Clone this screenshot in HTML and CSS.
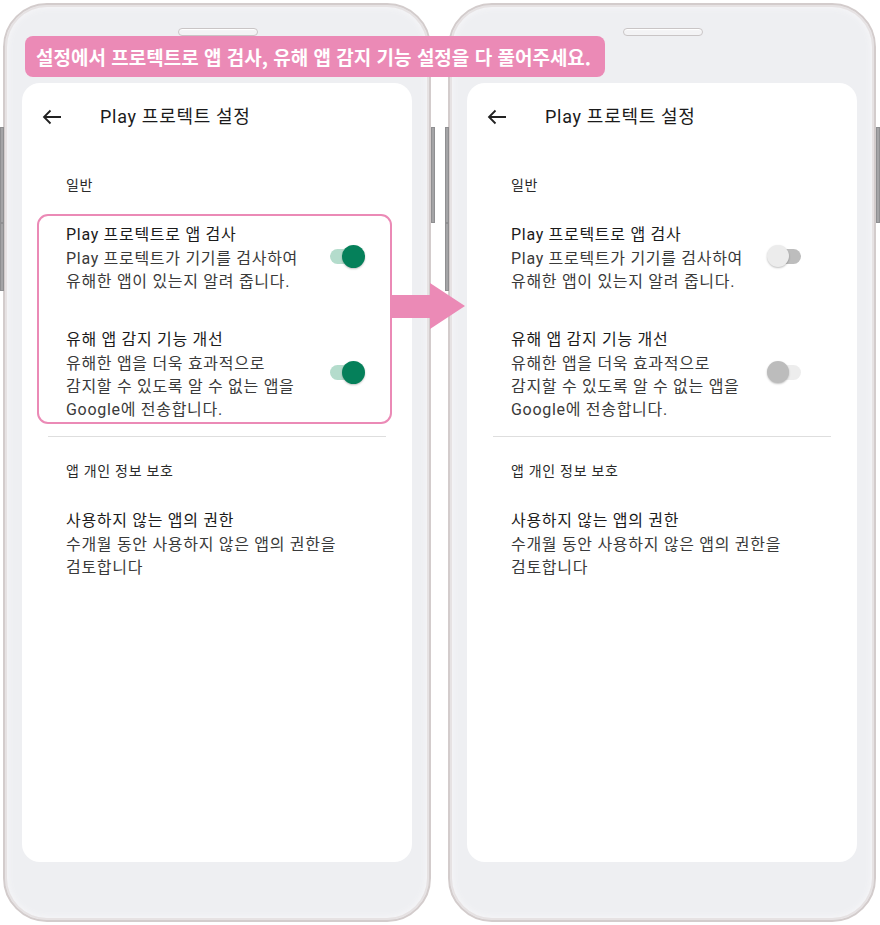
FILE: index.html
```html
<!DOCTYPE html>
<html lang="ko">
<head>
<meta charset="utf-8">
<title>Play 프로텍트 설정</title>
<link rel="stylesheet" href="styles.css">
</head>
<body>
<div class="stage">
  <div class="phone">
    <span class="side side-left side-a"></span>
    <span class="side side-left side-b"></span>
    <span class="side side-right side-a"></span>
    <div class="speaker"></div>
    <div class="screen">
      <div class="appbar">
        <svg class="back" viewBox="0 0 20 16" width="20" height="16"><path d="M19 8H2M8.5 1.5L2 8l6.5 6.5" fill="none" stroke="#222" stroke-width="1.8"/></svg>
        <h1 class="title">Play 프로텍트 설정</h1>
      </div>
      <div class="section-label">일반</div>
      <div class="group highlight">
        <div class="item">
          <div class="item-text">
            <div class="item-title">Play 프로텍트로 앱 검사</div>
            <div class="item-sub">Play 프로텍트가 기기를 검사하여<br>유해한 앱이 있는지 알려 줍니다.</div>
          </div>
          <span class="toggle on"><span class="track"></span><span class="thumb"></span></span>
        </div>
        <div class="item item-next">
          <div class="item-text">
            <div class="item-title">유해 앱 감지 기능 개선</div>
            <div class="item-sub">유해한 앱을 더욱 효과적으로<br>감지할 수 있도록 알 수 없는 앱을<br>Google에 전송합니다.</div>
          </div>
          <span class="toggle on"><span class="track"></span><span class="thumb"></span></span>
        </div>
      </div>
      <div class="divider"></div>
      <div class="section-label section-label-2">앱 개인 정보 보호</div>
      <div class="item item-solo">
        <div class="item-text">
          <div class="item-title">사용하지 않는 앱의 권한</div>
          <div class="item-sub">수개월 동안 사용하지 않은 앱의 권한을<br>검토합니다</div>
        </div>
      </div>
    </div>
  </div>

  <div class="phone">
    <span class="side side-left side-a"></span>
    <span class="side side-left side-b"></span>
    <span class="side side-right side-a"></span>
    <div class="speaker"></div>
    <div class="screen">
      <div class="appbar">
        <svg class="back" viewBox="0 0 20 16" width="20" height="16"><path d="M19 8H2M8.5 1.5L2 8l6.5 6.5" fill="none" stroke="#222" stroke-width="1.8"/></svg>
        <h1 class="title">Play 프로텍트 설정</h1>
      </div>
      <div class="section-label">일반</div>
      <div class="group">
        <div class="item">
          <div class="item-text">
            <div class="item-title">Play 프로텍트로 앱 검사</div>
            <div class="item-sub">Play 프로텍트가 기기를 검사하여<br>유해한 앱이 있는지 알려 줍니다.</div>
          </div>
          <span class="toggle off-a"><span class="track"></span><span class="thumb"></span></span>
        </div>
        <div class="item item-next">
          <div class="item-text">
            <div class="item-title">유해 앱 감지 기능 개선</div>
            <div class="item-sub">유해한 앱을 더욱 효과적으로<br>감지할 수 있도록 알 수 없는 앱을<br>Google에 전송합니다.</div>
          </div>
          <span class="toggle off-b"><span class="track"></span><span class="thumb"></span></span>
        </div>
      </div>
      <div class="divider"></div>
      <div class="section-label section-label-2">앱 개인 정보 보호</div>
      <div class="item item-solo">
        <div class="item-text">
          <div class="item-title">사용하지 않는 앱의 권한</div>
          <div class="item-sub">수개월 동안 사용하지 않은 앱의 권한을<br>검토합니다</div>
        </div>
      </div>
    </div>
  </div>

  <div class="banner">설정에서 프로텍트로 앱 검사, 유해 앱 감지 기능 설정을 다 풀어주세요.</div>
  <svg class="arrow" viewBox="0 0 76 47" width="76" height="47"><polygon points="0,12 40,12 40,0 75,23 40,46 40,35 0,35" fill="#eb8ab6"/></svg>
</div>
</body>
</html>
```

FILE: styles.css
```css
* { box-sizing: border-box; }
html, body { margin: 0; padding: 0; background: #ffffff; }
body {
  font-family: Roboto, "Noto Sans CJK KR", sans-serif;
  color: #1f1f1f;
}
.stage {
  position: relative;
  display: flex;
  gap: 17px;
  padding: 3px;
  width: 880px;
  height: 925px;
}
.phone {
  position: relative;
  width: 428px;
  height: 919px;
  border: 2px solid #d3cccc;
  border-radius: 44px;
  background: #eeeff2;
  box-shadow: inset 0 0 0 2px #e6e2e3, inset 0 0 6px 3px #f6f6f8;
  padding: 78px 17px 58px;
}
.side {
  position: absolute;
  width: 4px;
  background: #a4a4a6;
  border: 1px solid #8f8f91;
}
.side-left { left: -5px; }
.side-right { right: -6px; }
.side-a { top: 122px; height: 96px; }
.side-b { top: 218px; height: 68px; }
.speaker {
  position: absolute;
  top: 23px;
  left: 173px;
  width: 80px;
  height: 8px;
  border-radius: 5px;
  border: 1px solid #c9c5c6;
  background: #f3f3f5;
  box-shadow: inset 0 1px 1px #ffffff;
}
.screen {
  height: 779px;
  background: #ffffff;
  border-radius: 18px;
  padding-top: 10px;
  letter-spacing: 0.7px;
}
.appbar {
  display: flex;
  align-items: center;
  height: 48px;
  padding-left: 20px;
}
.back { display: block; flex: none; }
.title {
  margin: 0 0 0 38px;
  font-size: 18px;
  font-weight: 400;
  color: #1b1b1b;
  line-height: 24px;
}
.section-label {
  margin: 34px 0 0 44px;
  font-size: 14px;
  line-height: 20px;
  color: #2a2a2a;
}
.group {
  margin: 19px 20px 0 15px;
  border: 2px solid transparent;
  border-radius: 11px;
  padding: 7px 25px 1px 27px;
}
.group.highlight { border-color: #eb8ab6; }
.item {
  display: flex;
  align-items: center;
  justify-content: space-between;
}
.item-next { margin-top: 35px; }
.item-solo { margin: 28px 0 0 44px; }
.item-title {
  font-size: 16px;
  line-height: 24px;
  color: #1b1b1b;
}
.item-sub {
  font-size: 16px;
  line-height: 23px;
  color: #3a3a3a;
}
.divider {
  margin: 12px 26px 0;
  height: 1px;
  background: #dedede;
}
.section-label-2 { margin-top: 24px; }

.toggle {
  position: relative;
  flex: none;
  width: 35px;
  height: 23px;
  margin-bottom: 4px;
}
.track {
  position: absolute;
  top: 4px;
  height: 15px;
  border-radius: 8px;
}
.thumb {
  position: absolute;
  top: 0;
  width: 23px;
  height: 23px;
  border-radius: 50%;
  box-shadow: 0 1px 2px rgba(0,0,0,0.25);
}
.toggle.on .track { left: 0; right: 4px; background: #b4dccc; }
.toggle.on .thumb { right: 0; background: #05805a; }
.toggle.off-a, .toggle.off-b { margin-right: 9px; width: 34px; }
.toggle.off-a .track { left: 4px; right: 0; background: #bdbdbd; }
.toggle.off-a .thumb { left: 0; width: 22px; height: 22px; background: #ececec; }
.toggle.off-b .track { left: 4px; right: 0; background: #ededed; }
.toggle.off-b .thumb { left: 0; width: 22px; height: 22px; background: #bcbcbc; }

.banner {
  position: absolute;
  left: 25px;
  top: 36px;
  width: 580px;
  height: 41px;
  border-radius: 8px;
  background: #eb8ab6;
  color: #ffffff;
  font-family: "Noto Sans CJK KR", sans-serif;
  font-weight: 700;
  font-size: 19px;
  line-height: 41px;
  padding-left: 11px;
  white-space: nowrap;
}
.arrow {
  position: absolute;
  left: 390px;
  top: 283px;
}
```
